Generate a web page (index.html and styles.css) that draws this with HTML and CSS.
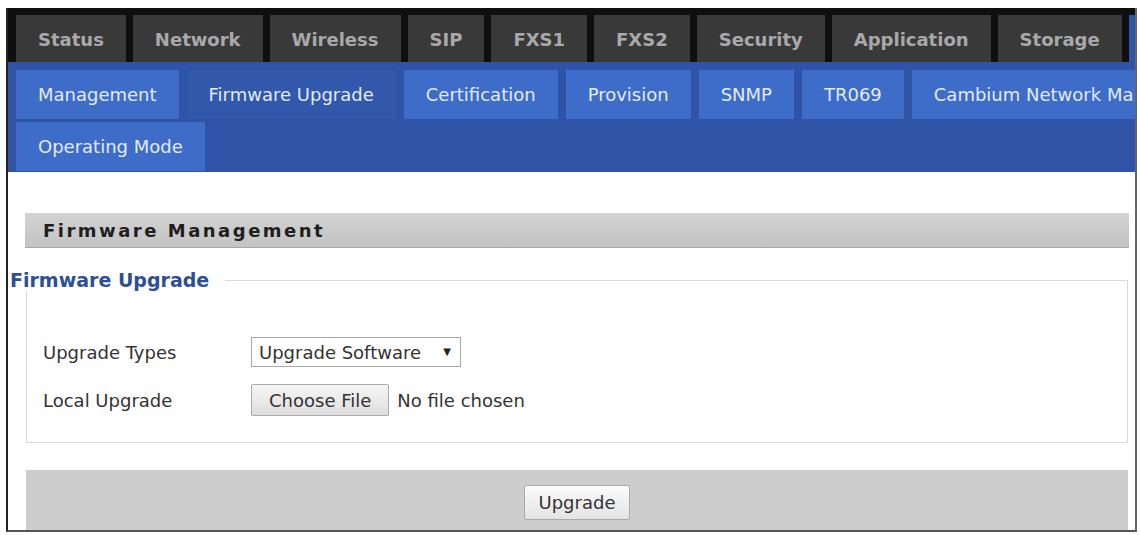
FILE: index.html
```html
<!DOCTYPE html>
<html lang="en">
<head>
    <meta charset="UTF-8">
    <title>Firmware Upgrade</title>
    <link rel="stylesheet" href="styles.css">
</head>
<body>

<div class="frame">
    <div class="topnav">
        <a class="tab" href="#">Status</a>
        <a class="tab" href="#">Network</a>
        <a class="tab" href="#">Wireless</a>
        <a class="tab" href="#">SIP</a>
        <a class="tab" href="#">FXS1</a>
        <a class="tab" href="#">FXS2</a>
        <a class="tab" href="#">Security</a>
        <a class="tab" href="#">Application</a>
        <a class="tab" href="#">Storage</a>
        <a class="tab active" href="#">Management</a>
    </div>

    <div class="subnav">
        <div class="subrow">
            <a class="subtab" href="#">Management</a>
            <a class="subtab current" href="#">Firmware Upgrade</a>
            <a class="subtab" href="#">Certification</a>
            <a class="subtab" href="#">Provision</a>
            <a class="subtab" href="#">SNMP</a>
            <a class="subtab" href="#">TR069</a>
            <a class="subtab" href="#">Cambium Network Management</a>
        </div>
        <div class="subrow">
            <a class="subtab" href="#">Operating Mode</a>
        </div>
    </div>

    <div class="content">
        <div class="section-title">Firmware Management</div>

        <fieldset class="group">
            <legend>Firmware Upgrade</legend>
            <div class="row">
                <label for="upgrade-type">Upgrade Types</label>
                <span class="select-wrap">
                    <select id="upgrade-type">
                        <option>Upgrade Software</option>
                    </select>
                </span>
            </div>
            <div class="row">
                <label for="local-file">Local Upgrade</label>
                <input type="file" id="local-file">
            </div>
        </fieldset>

        <div class="actions">
            <button class="upgrade">Upgrade</button>
        </div>
    </div>
</div>

</body>
</html>
```

FILE: styles.css
```css
body {
    margin: 0;
    background-color: #fff;
    font-family: "DejaVu Sans", Verdana, sans-serif;
}

.frame {
    margin: 8px 0 0 6px;
    width: 1131px;
    box-sizing: border-box;
    border-left: 2px solid #222;
    border-right: 2px solid #666;
    border-bottom: 2px solid #555;
}

/* top level menu */
.topnav {
    display: flex;
    gap: 7px;
    height: 54px;
    box-sizing: border-box;
    padding: 7px 0 0 8px;
    background-color: #0f0f0f;
    overflow: hidden;
}

.tab {
    flex: none;
    padding: 0 22px;
    line-height: 49px;
    background-color: #393939;
    color: #a9a9a9;
    font-size: 18px;
    font-weight: bold;
    text-decoration: none;
}

.tab.active {
    background-color: #2f55a8;
    color: #e2ebfb;
}

/* second level menu */
.subnav {
    display: flex;
    flex-direction: column;
    gap: 3px;
    padding: 8px 0 1px 8px;
    background-color: #2f54a7;
}

.subrow {
    display: flex;
    gap: 8px;
    overflow: hidden;
    white-space: nowrap;
}

.subtab {
    flex: none;
    padding: 0 22px;
    line-height: 49px;
    background-color: #3e6cc9;
    color: #e2ebfb;
    font-size: 18px;
    text-decoration: none;
}

.subtab.current {
    background-color: #3158ab;
}

/* page body */
.content {
    padding-top: 41px;
}

.section-title {
    margin: 0 6px 0 17px;
    height: 35px;
    box-sizing: border-box;
    padding-left: 18px;
    line-height: 35px;
    background: linear-gradient(#d3d3d3, #c3c3c3);
    border-bottom: 1px solid #a8a8a8;
    color: #1e1e1e;
    font-size: 18px;
    font-weight: bold;
    letter-spacing: 2.5px;
}

.group {
    margin: 21px 7px 0 18px;
    padding: 37px 16px 18px;
    border: 1px solid #d9d9d9;
    min-width: 0;
}

.group legend {
    margin-left: -33px;
    padding: 0 16px 0 0;
    line-height: 22px;
    color: #2d4f95;
    font-size: 19px;
    font-weight: bold;
}

.row {
    display: flex;
    align-items: center;
    height: 48px;
}

.row label {
    flex: none;
    width: 208px;
    color: #333;
    font-size: 18px;
}

.select-wrap {
    position: relative;
    display: inline-block;
}

.select-wrap::after {
    content: "\25BC";
    position: absolute;
    right: 10px;
    top: 9px;
    font-size: 10px;
    color: #222;
    pointer-events: none;
}

select {
    appearance: none;
    width: 210px;
    height: 30px;
    padding: 0 0 0 7px;
    border: 1px solid #a9a9a9;
    border-radius: 0;
    background-color: #fff;
    color: #333;
    font: 18px "DejaVu Sans", Verdana, sans-serif;
}

input[type="file"] {
    color: #333;
    font: 18px "DejaVu Sans", Verdana, sans-serif;
}

input[type="file"]::file-selector-button {
    height: 32px;
    margin-right: 8px;
    padding: 0 17px;
    border: 1px solid #aaa;
    border-radius: 2px;
    background: linear-gradient(#f6f6f6, #dedede);
    color: #333;
    font: inherit;
}

.actions {
    margin: 27px 7px 0 18px;
    height: 60px;
    box-sizing: border-box;
    padding-top: 15px;
    background-color: #cdcdcd;
    text-align: center;
}

.upgrade {
    height: 35px;
    padding: 0 14px;
    border: 1px solid #aaa;
    border-radius: 2px;
    background: linear-gradient(#fbfbfb, #e4e4e4);
    color: #333;
    font: 18px "DejaVu Sans", Verdana, sans-serif;
}
```
